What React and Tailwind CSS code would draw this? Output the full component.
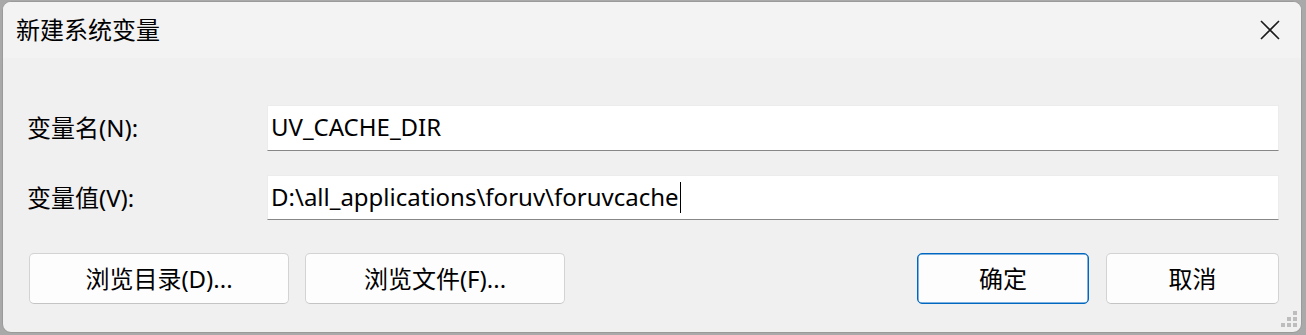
import React from "react";

const font = {
  fontFamily: '"Noto Sans", "Noto Sans CJK SC", sans-serif',
};

function Btn({ children, w, primary }) {
  return (
    <button
      className={
        "h-[51px] rounded-[5px] bg-[#fdfdfd] text-[24px] leading-none text-black flex items-center justify-center " +
        (primary
          ? "border border-[#0067c0] shadow-[inset_0_0_0_0.5px_#0067c0]"
          : "border border-[#d3d3d3] border-b-[#c4c4c4]") +
        " " +
        w
      }
    >
      {children}
    </button>
  );
}

export default function App() {
  return (
    <div className="w-[1306px] h-[335px] bg-[#a9a9a9] pl-[2px] pt-[1px]" style={font}>
      <div className="w-[1300px] h-[332px] rounded-[9px] border border-[#9a9a9a] bg-[#f0f0f0] overflow-hidden flex flex-col">
        <div className="h-[56px] bg-[#f3f3f3] flex items-center justify-between pl-[13px] pr-[20px]">
          <span className="text-[24px] text-black leading-none">新建系统变量</span>
          <svg width="20" height="20" viewBox="0 0 20 20" className="mr-[1px]">
            <path d="M1 1 L19 19 M19 1 L1 19" stroke="#1b1b1b" strokeWidth="1.6" fill="none" />
          </svg>
        </div>
        <div className="relative flex-1 pt-[47px] pl-[24px] pr-[22px]">
          <div className="flex items-center h-[46px]">
            <span className="w-[240px] text-[24px] leading-none text-black">变量名(N):</span>
            <div className="flex-1 h-[46px] bg-white border border-[#ececec] border-b-[#878787] flex items-center pl-[3px] pb-[2px] text-[24px] leading-none text-black">
              UV_CACHE_DIR
            </div>
          </div>
          <div className="flex items-center h-[45px] mt-[24px]">
            <span className="w-[240px] text-[24px] leading-none text-black">变量值(V):</span>
            <div className="flex-1 h-[45px] bg-white border border-[#ececec] border-b-[#878787] flex items-center pl-[3px] pb-[2px] text-[24px] leading-none text-black">
              <span>D:\all_applications\foruv\foruvcache</span>
              <span className="w-[1px] h-[31px] bg-black ml-[1px] mt-[2px]" />
            </div>
          </div>
          <div className="flex items-center mt-[33px]">
            <div className="flex gap-[16px] pl-[2px]">
              <Btn w="w-[260px]">浏览目录(D)...</Btn>
              <Btn w="w-[260px]">浏览文件(F)...</Btn>
            </div>
            <div className="flex gap-[17px] ml-auto">
              <Btn w="w-[172px]" primary>确定</Btn>
              <Btn w="w-[173px]">取消</Btn>
            </div>
          </div>
          <svg width="18" height="18" viewBox="0 0 18 18" className="absolute right-[2px] bottom-[3px]">
            <g fill="#bdbdbd">
              <rect x="12" y="0" width="4" height="4" />
              <rect x="6" y="6" width="4" height="4" />
              <rect x="12" y="6" width="4" height="4" />
              <rect x="0" y="12" width="4" height="4" />
              <rect x="6" y="12" width="4" height="4" />
              <rect x="12" y="12" width="4" height="4" />
            </g>
          </svg>
        </div>
      </div>
    </div>
  );
}
